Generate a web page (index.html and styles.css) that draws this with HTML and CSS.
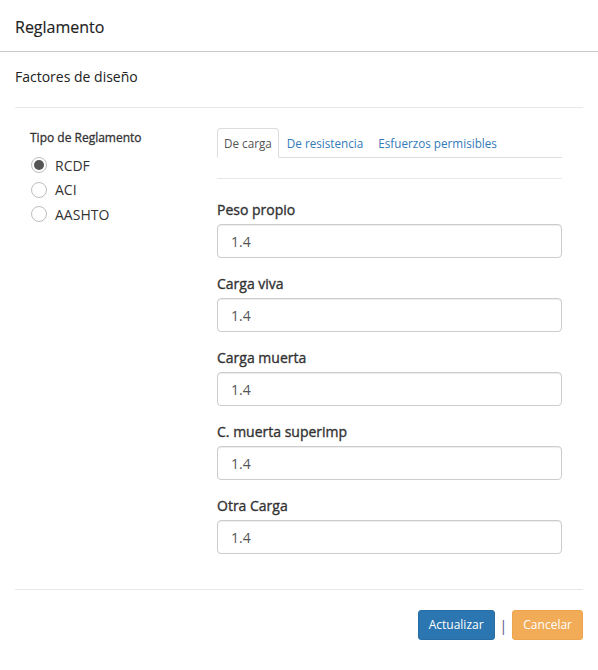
FILE: index.html
```html
<!DOCTYPE html>
<html lang="es">
<head>
<meta charset="utf-8">
<title>Reglamento</title>
<link rel="stylesheet" href="styles.css">
</head>
<body>
<div class="modal">
  <div class="modal-header">Reglamento</div>
  <div class="modal-body">
    <div class="subtitle">Factores de diseño</div>
    <hr class="sep">
    <div class="row">
      <div class="col-left">
        <div class="group-title">Tipo de Reglamento</div>
        <label class="radio"><input type="radio" name="reg" checked><span>RCDF</span></label>
        <label class="radio"><input type="radio" name="reg"><span>ACI</span></label>
        <label class="radio"><input type="radio" name="reg"><span>AASHTO</span></label>
      </div>
      <div class="col-right">
        <ul class="tabs">
          <li class="tab active">De carga</li>
          <li class="tab">De resistencia</li>
          <li class="tab">Esfuerzos permisibles</li>
        </ul>
        <hr class="inner-sep">
        <div class="form-group">
          <label class="field-label">Peso propio</label>
          <input class="field" type="text" value="1.4">
        </div>
        <div class="form-group">
          <label class="field-label">Carga viva</label>
          <input class="field" type="text" value="1.4">
        </div>
        <div class="form-group">
          <label class="field-label">Carga muerta</label>
          <input class="field" type="text" value="1.4">
        </div>
        <div class="form-group">
          <label class="field-label">C. muerta superimp</label>
          <input class="field" type="text" value="1.4">
        </div>
        <div class="form-group last">
          <label class="field-label">Otra Carga</label>
          <input class="field" type="text" value="1.4">
        </div>
      </div>
    </div>
    <hr class="sep footer-sep">
    <div class="footer">
      <button class="btn btn-primary">Actualizar</button>
      <span class="pipe">|</span>
      <button class="btn btn-warning">Cancelar</button>
    </div>
  </div>
</div>
</body>
</html>
```
FILE: styles.css
```css
* { box-sizing: border-box; }
html, body {
  margin: 0;
  padding: 0;
  background: #fff;
  font-family: "Open Sans", "Noto Sans", sans-serif;
  color: #333;
}
.modal {
  width: 598px;
  height: 670px;
  background: #fff;
}
.modal-header {
  height: 52px;
  padding: 16px 15px 0;
  font-size: 16px;
  line-height: 22px;
  color: #222;
  -webkit-text-stroke: 0.15px #222;
  border-bottom: 1px solid #c8c8c8;
}
.modal-body {
  padding: 0 15px;
}
.subtitle {
  font-size: 14px;
  line-height: 20px;
  padding-top: 15px;
  color: #222;
}
.sep {
  border: 0;
  border-top: 1px solid #e8e8e8;
  margin: 20px 0 0;
  height: 0;
}
.row {
  display: flex;
  padding-top: 20px;
}
.col-left {
  width: 202px;
  padding-left: 15px;
}
.group-title {
  font-size: 12px;
  line-height: 17px;
  padding-top: 1px;
  margin-bottom: 7px;
  color: #333;
  -webkit-text-stroke: 0.3px #333;
}
.radio {
  display: flex;
  align-items: center;
  height: 24.5px;
  font-size: 14px;
  cursor: pointer;
}
.radio input {
  appearance: none;
  -webkit-appearance: none;
  width: 16px;
  height: 16px;
  margin: 0 8px 0 1px;
  border: 1px solid #bdbdbd;
  border-radius: 50%;
  background: #fff;
  display: grid;
  place-content: center;
}
.radio input:checked::before {
  content: "";
  width: 10px;
  height: 10px;
  border-radius: 50%;
  background: #555;
}
.col-right {
  width: 345px;
}
.tabs {
  list-style: none;
  margin: 0;
  padding: 0;
  display: flex;
  border-bottom: 1px solid #ddd;
}
.tab {
  font-size: 11.7px;
  line-height: 18px;
  padding: 5px 6px;
  margin-right: 1px;
  margin-bottom: -1px;
  color: #337ab7;
  border: 1px solid transparent;
  border-radius: 4px 4px 0 0;
}
.tab.active {
  color: #555;
  background: #fff;
  border-color: #ddd #ddd transparent;
}
.inner-sep {
  border: 0;
  border-top: 1px solid #e8e8e8;
  margin: 20px 0 21px;
  height: 0;
}
.form-group {
  margin-bottom: 16px;
}
.form-group.last {
  margin-bottom: 0;
}
.field-label {
  display: block;
  font-size: 14px;
  line-height: 20px;
  margin-bottom: 4px;
  color: #333;
  -webkit-text-stroke: 0.35px #333;
}
.field {
  display: block;
  width: 100%;
  height: 34px;
  padding: 6px 13px;
  font-family: inherit;
  font-size: 14px;
  color: #555;
  border: 1px solid #ccc;
  border-radius: 4px;
  background: #fff;
  box-shadow: inset 0 1px 1px rgba(0,0,0,0.075);
}
.footer-sep {
  margin-top: 35px;
}
.footer {
  display: flex;
  justify-content: flex-end;
  align-items: center;
  padding-top: 20px;
}
.btn {
  font-family: inherit;
  font-size: 12px;
  line-height: 18px;
  height: 30px;
  padding: 5px 10px;
  border: 1px solid transparent;
  border-radius: 3px;
  color: #fff;
  cursor: pointer;
}
.btn-primary {
  background: #2b75b0;
  border-color: #286ea5;
}
.btn-warning {
  background: #f2ac58;
  border-color: #eea34e;
}
.pipe {
  font-size: 14px;
  color: #55558a;
  margin: 0 5px;
}
```
